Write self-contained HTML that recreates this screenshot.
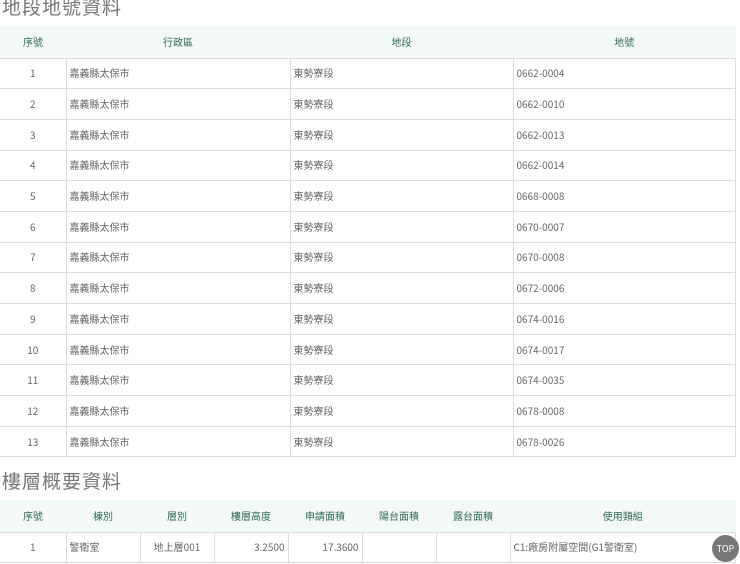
<html><head><style>
body{margin:0;width:740px;height:564px;overflow:hidden;background:#fff;font-family:"Noto Sans CJK TC",sans-serif;color:#666;}
h2{margin:0;font-weight:normal;font-size:19px;line-height:22px;color:#777;position:absolute;left:2px;letter-spacing:1px}
table{position:absolute;left:0;width:736px;border-collapse:collapse;table-layout:fixed;font-size:10px}
th{background:#f3f8f9;color:#2f6a55;font-weight:normal;height:32px;padding:0;line-height:14px}
td{border:1px solid #ddd;height:30.7px;padding:0 3px;line-height:14px;vertical-align:middle;box-sizing:border-box}
td:first-child{border-left:none;text-align:center}
.c{text-align:center}.r{text-align:right}
#top{position:absolute;left:712px;top:535px;width:27px;height:27px;border-radius:50%;background:#777;color:#fff;font-size:9px;line-height:27px;text-align:center}
</style></head><body>
<h2 style="top:-4px">地段地號資料</h2>
<table style="top:26px"><colgroup><col style="width:66px"><col style="width:224px"><col style="width:223px"><col></colgroup>
<tr><th>序號</th><th>行政區</th><th>地段</th><th>地號</th></tr>
<tr><td>1</td><td>嘉義縣太保市</td><td>東勢寮段</td><td>0662-0004</td></tr>
<tr><td>2</td><td>嘉義縣太保市</td><td>東勢寮段</td><td>0662-0010</td></tr>
<tr><td>3</td><td>嘉義縣太保市</td><td>東勢寮段</td><td>0662-0013</td></tr>
<tr><td>4</td><td>嘉義縣太保市</td><td>東勢寮段</td><td>0662-0014</td></tr>
<tr><td>5</td><td>嘉義縣太保市</td><td>東勢寮段</td><td>0668-0008</td></tr>
<tr><td>6</td><td>嘉義縣太保市</td><td>東勢寮段</td><td>0670-0007</td></tr>
<tr><td>7</td><td>嘉義縣太保市</td><td>東勢寮段</td><td>0670-0008</td></tr>
<tr><td>8</td><td>嘉義縣太保市</td><td>東勢寮段</td><td>0672-0006</td></tr>
<tr><td>9</td><td>嘉義縣太保市</td><td>東勢寮段</td><td>0674-0016</td></tr>
<tr><td>10</td><td>嘉義縣太保市</td><td>東勢寮段</td><td>0674-0017</td></tr>
<tr><td>11</td><td>嘉義縣太保市</td><td>東勢寮段</td><td>0674-0035</td></tr>
<tr><td>12</td><td>嘉義縣太保市</td><td>東勢寮段</td><td>0678-0008</td></tr>
<tr><td>13</td><td>嘉義縣太保市</td><td>東勢寮段</td><td>0678-0026</td></tr>
</table>
<h2 style="top:470px">樓層概要資料</h2>
<table style="top:500px"><colgroup><col style="width:66px"><col style="width:74px"><col style="width:74px"><col style="width:74px"><col style="width:74px"><col style="width:74px"><col style="width:74px"><col></colgroup>
<tr><th>序號</th><th>棟別</th><th>層別</th><th>樓層高度</th><th>申請面積</th><th>陽台面積</th><th>露台面積</th><th>使用類組</th></tr>
<tr><td>1</td><td>警衛室</td><td class="c">地上層001</td><td class="r">3.2500</td><td class="r">17.3600</td><td></td><td></td><td>C1:廠房附屬空間(G1警衛室)</td></tr>
</table>
<div id="top">TOP</div>
</body></html>
